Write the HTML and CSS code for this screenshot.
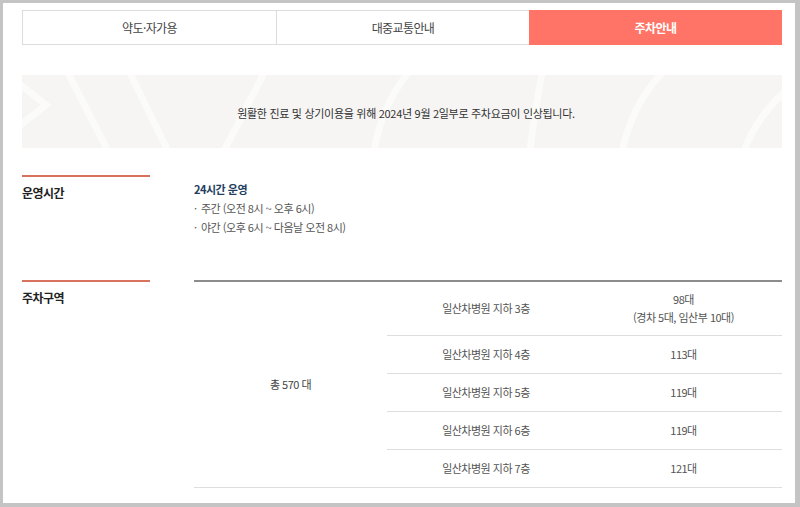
FILE: index.html
```html
<!DOCTYPE html>
<html lang="ko">
<head>
<meta charset="utf-8">
<title>주차안내</title>
<link rel="stylesheet" href="styles.css">
</head>
<body>
<div class="frame">
  <nav class="tabs">
    <a class="tab">약도·자가용</a>
    <a class="tab">대중교통안내</a>
    <a class="tab active">주차안내</a>
  </nav>

  <div class="banner">
    <svg class="banner-bg" viewBox="0 0 760 73" preserveAspectRatio="none" aria-hidden="true">
      <g fill="none" stroke="#ffffff" stroke-width="7" opacity="0.6">
        <polyline points="-4,8 24,30 -4,52"/>
        <line x1="46" y1="-2" x2="86" y2="76"/>
        <line x1="108" y1="-2" x2="146" y2="76"/>
        <line x1="242" y1="-2" x2="202" y2="76"/>
        <path d="M386,-2 Q360,30 352,76"/>
        <path d="M520,-2 Q512,40 508,76"/>
        <path d="M640,-2 Q610,30 600,76"/>
        <path d="M770,10 Q735,40 722,76"/>
      </g>
    </svg>
    <p class="banner-text">원활한 진료 및 상기이용을 위해 2024년 9월 2일부로 주차요금이 인상됩니다.</p>
  </div>

  <section class="info info-hours">
    <h3 class="info-title">운영시간</h3>
    <div class="info-body">
      <p class="strong">24시간 운영</p>
      <ul class="bullets">
        <li>주간 (오전 8시 ~ 오후 6시)</li>
        <li>야간 (오후 6시 ~ 다음날 오전 8시)</li>
      </ul>
    </div>
  </section>

  <section class="info info-zone">
    <h3 class="info-title">주차구역</h3>
    <div class="info-body">
      <table class="zone-table">
        <colgroup>
          <col class="c1"><col class="c2"><col class="c3">
        </colgroup>
        <tbody>
          <tr class="first">
            <td class="total" rowspan="5">총 570 대</td>
            <td>일산차병원 지하 3층</td>
            <td>98대<br>(경차 5대, 임산부 10대)</td>
          </tr>
          <tr><td>일산차병원 지하 4층</td><td>113대</td></tr>
          <tr><td>일산차병원 지하 5층</td><td>119대</td></tr>
          <tr><td>일산차병원 지하 6층</td><td>119대</td></tr>
          <tr class="last"><td>일산차병원 지하 7층</td><td>121대</td></tr>
        </tbody>
      </table>
    </div>
  </section>
</div>
</body>
</html>
```

FILE: styles.css
```css
* { box-sizing: border-box; }

html, body {
  margin: 0;
  padding: 0;
  background: #ffffff;
}

body {
  font-family: "Noto Sans CJK KR", "Noto Sans", sans-serif;
  color: #444;
  font-size: 11px;
  letter-spacing: -0.5px;
}

.frame {
  width: 800px;
  height: 507px;
  overflow: hidden;
  border-style: solid;
  border-color: #c4c4c4;
  border-width: 3px 5px 4px 3px;
  padding: 7px 13px 0 19px;
  background: #fff;
}

/* Tabs */
.tabs {
  display: grid;
  grid-template-columns: 253px 253px 1fr;
  height: 35px;
  border: 1px solid #dcdcdc;
}

.tab {
  display: flex;
  align-items: center;
  justify-content: center;
  font-size: 12px;
  letter-spacing: -0.6px;
  color: #444;
}

.tab + .tab {
  border-left: 1px solid #dcdcdc;
}

.tab.active {
  background: #ff7466;
  color: #fff;
  font-weight: 700;
  margin: -1px -1px -1px 0;
  border-left: none;
}

/* Banner */
.banner {
  position: relative;
  margin-top: 30px;
  height: 73px;
  background: #f6f5f3;
  display: flex;
  align-items: center;
  justify-content: center;
  overflow: hidden;
}

.banner-bg {
  position: absolute;
  left: 0;
  top: 0;
  width: 100%;
  height: 100%;
}

.banner-text {
  position: relative;
  margin: 0;
  font-size: 11px;
  letter-spacing: -0.3px;
  color: #333;
  padding: 2px 0 0 8px;
}

/* Info sections */
.info {
  display: grid;
  grid-template-columns: 128px 1fr;
  column-gap: 44px;
}

.info-hours {
  margin-top: 27px;
  height: 105px;
}

.info-title {
  margin: 0;
  border-top: 2px solid #d9715f;
  padding-top: 7px;
  font-size: 12px;
  font-weight: 700;
  color: #222;
  line-height: 17px;
}

.info-hours .info-body {
  padding-top: 5px;
}

.strong {
  margin: 0;
  font-weight: 700;
  color: #243e62;
  line-height: 19px;
}

.bullets {
  margin: 0;
  padding: 0;
  list-style: none;
  color: #555;
}

.bullets li {
  line-height: 19px;
}

.bullets li::before {
  content: "·";
  display: inline-block;
  width: 7px;
}

/* Table */
.zone-table {
  width: 100%;
  border-collapse: collapse;
  border-top: 2px solid #8c8c8c;
  color: #555;
  text-align: center;
  table-layout: fixed;
}

.zone-table .c1 { width: 193px; }
.zone-table .c2 { width: 198px; }

.zone-table td {
  height: 38px;
  padding: 0;
  border-bottom: 1px solid #dedede;
  line-height: 18px;
  vertical-align: middle;
}

.zone-table tr.first td {
  height: 54px;
}

.zone-table td.total {
  height: auto;
  color: #444;
}
```
